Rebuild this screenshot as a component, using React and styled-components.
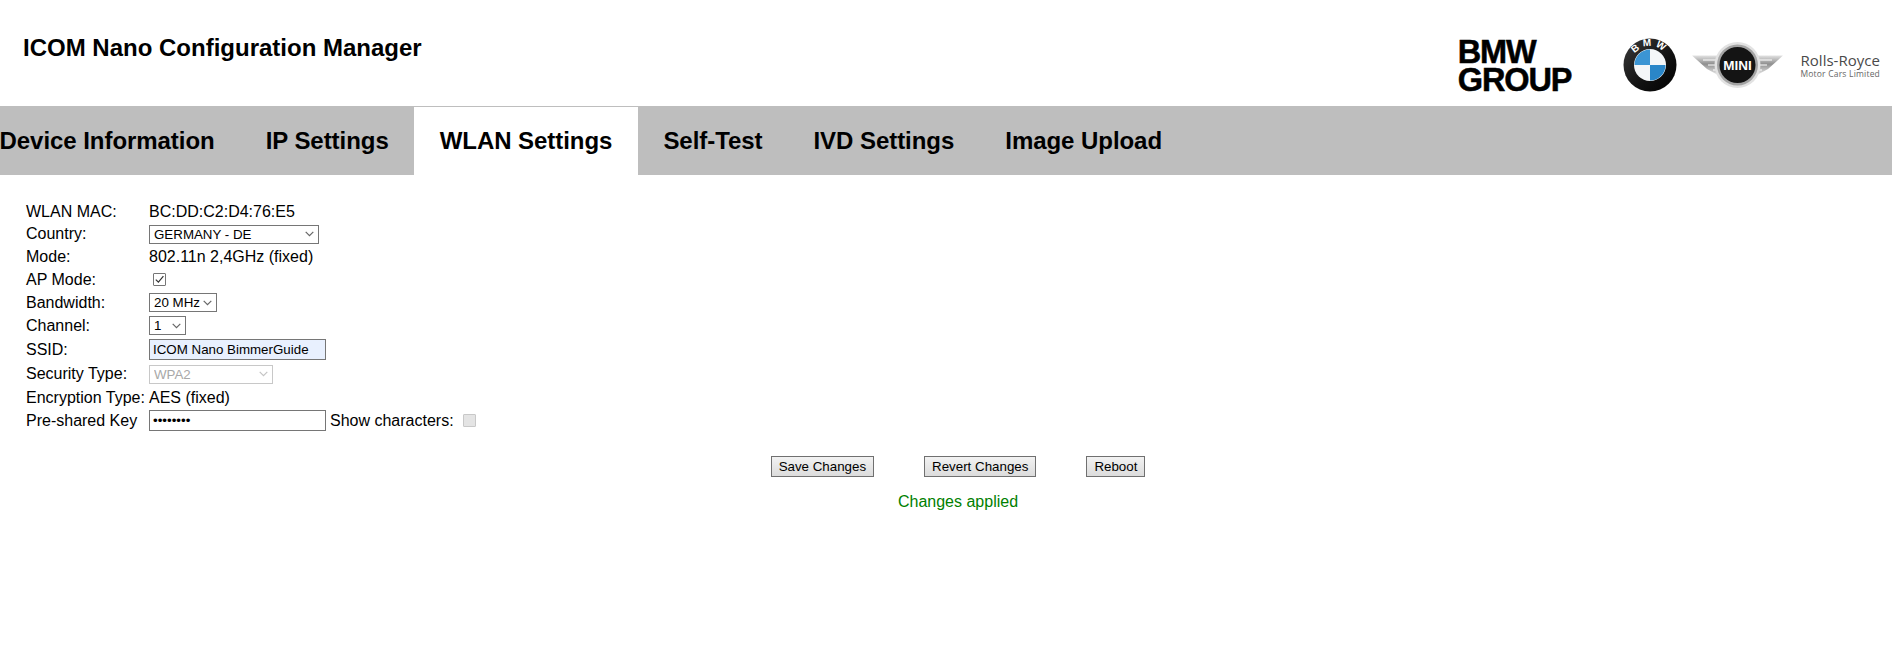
import React from "react";
import styled, { createGlobalStyle } from "styled-components";

const chevron = (color) =>
  `url("data:image/svg+xml,%3Csvg xmlns='http://www.w3.org/2000/svg' width='9' height='6' viewBox='0 0 9 6'%3E%3Cpath d='M.7.9l3.8 3.8L8.3.9' fill='none' stroke='${color}' stroke-width='1.2'/%3E%3C/svg%3E")`;

const GlobalStyle = createGlobalStyle`
  html, body {
    margin: 0;
    padding: 0;
    background: #fff;
    font-family: "Liberation Sans", Arial, sans-serif;
    font-size: 16px;
    color: #000;
  }
`;

const Page = styled.div`
  width: 1892px;
  height: 671px;
  overflow: hidden;
`;

const Header = styled.header`
  height: 106px;
  display: flex;
  justify-content: space-between;
  padding-left: 23px;
  box-sizing: border-box;
`;

const Title = styled.h1`
  margin: 34px 0 0;
  font-size: 24px;
  line-height: 27px;
  font-weight: 700;
`;

const Logos = styled.div`
  display: flex;
  align-items: flex-start;
  padding-right: 12px;
`;

const GroupWordmark = styled.div`
  margin: 38px 52px 0 0;
  font-size: 32.5px;
  line-height: 28px;
  font-weight: 700;
  letter-spacing: -1.1px;
  color: #000;
  -webkit-text-stroke: 0.5px #000;
`;

const LogoSvg = styled.svg`
  display: block;
  margin-top: ${(p) => p.$top}px;
  margin-right: ${(p) => p.$right}px;
`;

const RollsRoyce = styled.div`
  margin-top: 52px;
  text-align: center;
`;

const RollsName = styled.div`
  font-family: "Open Sans", "Liberation Sans", sans-serif;
  font-size: 15px;
  line-height: 17px;
  color: #4a4a4a;
`;

const RollsSub = styled.div`
  font-family: "Open Sans", "Liberation Sans", sans-serif;
  font-size: 8.5px;
  line-height: 10px;
  letter-spacing: 0.2px;
  color: #666;
`;

const Nav = styled.nav`
  height: 69px;
  background: #bebebe;
  display: flex;
  margin-left: -26px;
  padding-top: 1px;
  box-sizing: border-box;
`;

const Tab = styled.a`
  display: flex;
  align-items: center;
  padding: 0 25.5px;
  font-size: 24px;
  font-weight: 700;
  letter-spacing: -0.05px;
  color: #000;
  background: ${(p) => (p.$active ? "#fff" : "transparent")};
`;

const Content = styled.main`
  padding: 26px 2px 0 26px;
`;

const Row = styled.div`
  display: grid;
  grid-template-columns: 123px 1fr;
  align-items: center;
  height: ${(p) => p.$h}px;
`;

const Value = styled.div`
  display: flex;
  align-items: center;
  line-height: 18px;
`;

const Label = styled.label`
  line-height: 18px;
`;

const Select = styled.select`
  box-sizing: border-box;
  width: ${(p) => p.$w}px;
  height: 19px;
  padding: 0 0 0 4px;
  border-radius: 0;
  border: 1px solid ${(p) => (p.disabled ? "#c8c8c8" : "#767676")};
  appearance: none;
  background: #fff ${(p) => chevron(p.disabled ? "%23c4c4c4" : "%23666")} no-repeat right 4px center;
  font-family: "Liberation Sans", Arial, sans-serif;
  font-size: 13.33px;
  color: ${(p) => (p.disabled ? "#a8a8a8" : "#000")};
  opacity: 1;
`;

const TextInput = styled.input`
  box-sizing: border-box;
  width: 177px;
  height: 21px;
  padding: 1px 3px;
  margin: 0;
  border-radius: 0;
  border: 1px solid #767676;
  background: ${(p) => p.$bg || "#fff"};
  font-family: "Liberation Sans", Arial, sans-serif;
  font-size: 13.33px;
  color: #000;
`;

const Box = styled.input`
  box-sizing: border-box;
  appearance: none;
  width: 13px;
  height: 13px;
  margin: 0 0 0 ${(p) => p.$left}px;
  border: 1px solid #767676;
  border-radius: 1px;
  background: #fff;
  &:checked {
    background: #fff
      url("data:image/svg+xml,%3Csvg xmlns='http://www.w3.org/2000/svg' width='11' height='11' viewBox='0 0 11 11'%3E%3Cpath d='M1.800 5.600l2.600 2.600 5-6' fill='none' stroke='%23333' stroke-width='1.200'/%3E%3C/svg%3E")
      no-repeat center;
  }
  &:disabled {
    background: #e4e4e4;
    border-color: #c8c8c8;
  }
`;

const ShowText = styled.span`
  margin-left: 4px;
`;

const Actions = styled.div`
  display: flex;
  justify-content: center;
  gap: 50px;
  margin-top: 24px;
`;

const Button = styled.button`
  box-sizing: border-box;
  height: 21px;
  padding: 0 7px;
  border: 1px solid #707070;
  border-radius: 0;
  background: linear-gradient(#f2f2f2, #dcdcdc);
  font-family: "Liberation Sans", Arial, sans-serif;
  font-size: 13.33px;
  color: #000;
`;

const Status = styled.div`
  margin-top: 16px;
  text-align: center;
  line-height: 18px;
  color: #008000;
`;

const BmwRoundel = () => (
  <LogoSvg $top={37} $right={15} width="54" height="56" viewBox="0 0 54 56">
    <defs>
      <path id="bmwArc" d="M8 28a19 19 0 0 1 38 0" />
      <linearGradient id="bmwRim" x1="0" y1="0" x2="1" y2="1">
        <stop offset="0" stopColor="#3a3a3a" />
        <stop offset="0.6" stopColor="#111" />
        <stop offset="1" stopColor="#000" />
      </linearGradient>
    </defs>
    <circle cx="27" cy="28" r="26.500" fill="url(#bmwRim)" />
    <circle cx="27" cy="28" r="16" fill="#f4f6f8" />
    <path d="M27 12.500a15.500 15.500 0 0 0-15.500 15.500H27z" fill="#3b95d4" />
    <path d="M27 43.500a15.500 15.500 0 0 0 15.500-15.500H27z" fill="#2a86c8" />
    <text fill="#fff" fontSize="10" fontWeight="700" fontFamily="Liberation Sans, sans-serif" letterSpacing="3.500">
      <textPath href="#bmwArc" startOffset="50%" textAnchor="middle">
        BMW
      </textPath>
    </text>
  </LogoSvg>
);

const MiniBadge = () => (
  <LogoSvg $top={40} $right={17} width="91" height="50" viewBox="0 0 91 50">
    <defs>
      <linearGradient id="miniWing" x1="0" y1="0" x2="0" y2="1">
        <stop offset="0" stopColor="#e2e2e2" />
        <stop offset="0.45" stopColor="#8f8f8f" />
        <stop offset="1" stopColor="#e6e6e6" />
      </linearGradient>
    </defs>
    <path d="M0 15.500h31v19H25L15 29z" fill="url(#miniWing)" />
    <path d="M91 15.500H60v19h6l10-5.500z" fill="url(#miniWing)" />
    <g stroke="#fff" strokeWidth="1.200">
      <path d="M11 20h20M16 25h15M21 30h10M60 20h20M60 25h15M60 30h10" />
    </g>
    <circle cx="45.500" cy="25" r="23" fill="#e2e2e2" />
    <circle cx="45.500" cy="25" r="20.500" fill="#a4a4a4" />
    <circle cx="45.500" cy="25" r="18" fill="#141414" />
    <text
      x="45.500"
      y="30"
      fill="#fff"
      fontSize="13.500"
      fontWeight="700"
      fontFamily="Liberation Sans, sans-serif"
      textAnchor="middle"
    >
      MINI
    </text>
  </LogoSvg>
);

export default function App() {
  return (
    <Page>
      <GlobalStyle />
      <Header>
        <Title>ICOM Nano Configuration Manager</Title>
        <Logos>
          <GroupWordmark>
            BMW
            <br />
            GROUP
          </GroupWordmark>
          <BmwRoundel />
          <MiniBadge />
          <RollsRoyce>
            <RollsName>Rolls-Royce</RollsName>
            <RollsSub>Motor Cars Limited</RollsSub>
          </RollsRoyce>
        </Logos>
      </Header>
      <Nav>
        <Tab>Device Information</Tab>
        <Tab>IP Settings</Tab>
        <Tab $active>WLAN Settings</Tab>
        <Tab>Self-Test</Tab>
        <Tab>IVD Settings</Tab>
        <Tab>Image Upload</Tab>
      </Nav>
      <Content>
        <Row $h={22}>
          <Label>WLAN MAC:</Label>
          <Value>BC:DD:C2:D4:76:E5</Value>
        </Row>
        <Row $h={22}>
          <Label>Country:</Label>
          <Value>
            <Select $w={170} defaultValue="de">
              <option value="de">GERMANY - DE</option>
            </Select>
          </Value>
        </Row>
        <Row $h={23}>
          <Label>Mode:</Label>
          <Value>802.11n 2,4GHz (fixed)</Value>
        </Row>
        <Row $h={23}>
          <Label>AP Mode:</Label>
          <Value>
            <Box type="checkbox" $left={4} defaultChecked />
          </Value>
        </Row>
        <Row $h={23}>
          <Label>Bandwidth:</Label>
          <Value>
            <Select $w={68} defaultValue="20">
              <option value="20">20 MHz</option>
            </Select>
          </Value>
        </Row>
        <Row $h={23}>
          <Label>Channel:</Label>
          <Value>
            <Select $w={37} defaultValue="1">
              <option value="1">1</option>
            </Select>
          </Value>
        </Row>
        <Row $h={25}>
          <Label>SSID:</Label>
          <Value>
            <TextInput type="text" $bg="#e8f0fe" defaultValue="ICOM Nano BimmerGuide" />
          </Value>
        </Row>
        <Row $h={24}>
          <Label>Security Type:</Label>
          <Value>
            <Select $w={124} disabled defaultValue="wpa2">
              <option value="wpa2">WPA2</option>
            </Select>
          </Value>
        </Row>
        <Row $h={23}>
          <Label>Encryption Type:</Label>
          <Value>AES (fixed)</Value>
        </Row>
        <Row $h={23}>
          <Label>Pre-shared Key</Label>
          <Value>
            <TextInput type="password" defaultValue="12345678" />
            <ShowText>Show characters:</ShowText>
            <Box type="checkbox" $left={9} disabled />
          </Value>
        </Row>
        <Actions>
          <Button>Save Changes</Button>
          <Button>Revert Changes</Button>
          <Button>Reboot</Button>
        </Actions>
        <Status>Changes applied</Status>
      </Content>
    </Page>
  );
}
